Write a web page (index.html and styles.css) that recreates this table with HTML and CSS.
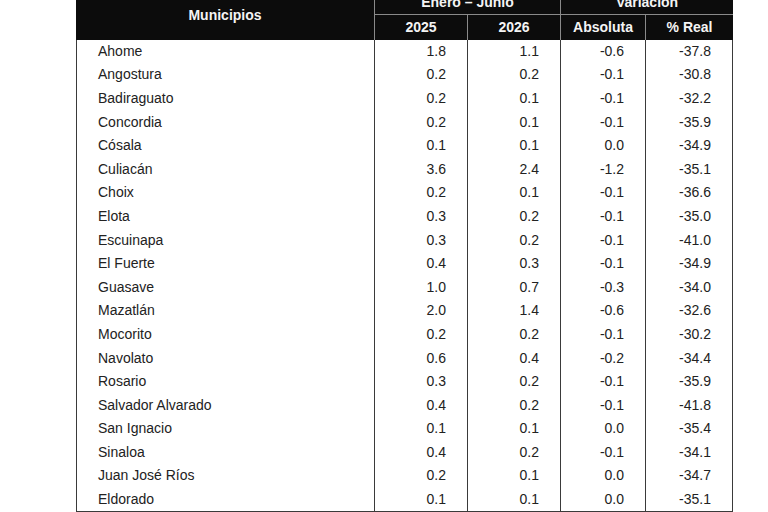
FILE: index.html
```html
<!DOCTYPE html>
<html lang="es">
<head>
<meta charset="utf-8">
<title>Municipios Enero – Junio</title>
<link rel="stylesheet" href="styles.css">
</head>
<body>
<div class="page">
<table class="data">
  <colgroup>
    <col class="c-mun">
    <col class="c-y1">
    <col class="c-y2">
    <col class="c-abs">
    <col class="c-real">
  </colgroup>
  <thead>
    <tr class="h1">
      <th rowspan="2" class="mun">Municipios</th>
      <th colspan="2" class="grp">Enero – Junio</th>
      <th colspan="2" class="grp last">Variación</th>
    </tr>
    <tr class="h2">
      <th>2025</th>
      <th>2026</th>
      <th>Absoluta</th>
      <th class="last">% Real</th>
    </tr>
  </thead>
  <tbody>
    <tr><td>Ahome</td><td>1.8</td><td>1.1</td><td>-0.6</td><td>-37.8</td></tr>
    <tr><td>Angostura</td><td>0.2</td><td>0.2</td><td>-0.1</td><td>-30.8</td></tr>
    <tr><td>Badiraguato</td><td>0.2</td><td>0.1</td><td>-0.1</td><td>-32.2</td></tr>
    <tr><td>Concordia</td><td>0.2</td><td>0.1</td><td>-0.1</td><td>-35.9</td></tr>
    <tr><td>Cósala</td><td>0.1</td><td>0.1</td><td>0.0</td><td>-34.9</td></tr>
    <tr><td>Culiacán</td><td>3.6</td><td>2.4</td><td>-1.2</td><td>-35.1</td></tr>
    <tr><td>Choix</td><td>0.2</td><td>0.1</td><td>-0.1</td><td>-36.6</td></tr>
    <tr><td>Elota</td><td>0.3</td><td>0.2</td><td>-0.1</td><td>-35.0</td></tr>
    <tr><td>Escuinapa</td><td>0.3</td><td>0.2</td><td>-0.1</td><td>-41.0</td></tr>
    <tr><td>El Fuerte</td><td>0.4</td><td>0.3</td><td>-0.1</td><td>-34.9</td></tr>
    <tr><td>Guasave</td><td>1.0</td><td>0.7</td><td>-0.3</td><td>-34.0</td></tr>
    <tr><td>Mazatlán</td><td>2.0</td><td>1.4</td><td>-0.6</td><td>-32.6</td></tr>
    <tr><td>Mocorito</td><td>0.2</td><td>0.2</td><td>-0.1</td><td>-30.2</td></tr>
    <tr><td>Navolato</td><td>0.6</td><td>0.4</td><td>-0.2</td><td>-34.4</td></tr>
    <tr><td>Rosario</td><td>0.3</td><td>0.2</td><td>-0.1</td><td>-35.9</td></tr>
    <tr><td>Salvador Alvarado</td><td>0.4</td><td>0.2</td><td>-0.1</td><td>-41.8</td></tr>
    <tr><td>San Ignacio</td><td>0.1</td><td>0.1</td><td>0.0</td><td>-35.4</td></tr>
    <tr><td>Sinaloa</td><td>0.4</td><td>0.2</td><td>-0.1</td><td>-34.1</td></tr>
    <tr><td>Juan José Ríos</td><td>0.2</td><td>0.1</td><td>0.0</td><td>-34.7</td></tr>
    <tr><td>Eldorado</td><td>0.1</td><td>0.1</td><td>0.0</td><td>-35.1</td></tr>
  </tbody>
</table>
</div>
</body>
</html>
```
FILE: styles.css
```css
html, body {
  margin: 0;
  padding: 0;
  background: #ffffff;
}
body {
  width: 768px;
  height: 512px;
  overflow: hidden;
  font-family: "Liberation Sans", Arial, sans-serif;
}
.page {
  padding-left: 76px;
}
.data {
  margin-top: -11px;
  table-layout: fixed;
  width: 657px;
  border-collapse: separate;
  border-spacing: 0;
  font-size: 14px;
  color: #222222;
}
.c-mun { width: 299px; }
.c-y1 { width: 93px; }
.c-y2 { width: 93px; }
.c-abs { width: 85px; }
.c-real { width: 87px; }

.data th {
  background: #0c0c0c;
  color: #f4f4f4;
  font-weight: bold;
  text-align: center;
  padding: 0;
  line-height: 16px;
  border-right: 1px solid #8a8a8a;
}
.data th.last {
  border-right: none;
}
.data .h1 th {
  height: 25px;
}
.data .h1 th.grp {
  border-bottom: 1px solid #8a8a8a;
}
.data .h2 th {
  height: 24px;
  padding-bottom: 1px;
}

.data tbody tr {
  height: 23.6px;
}
.data td {
  padding: 0 21px 2px 21px;
  line-height: 16px;
  text-align: right;
  border-right: 1px solid #3a3a3a;
  white-space: nowrap;
}
.data td:first-child {
  text-align: left;
  border-left: 1px solid #3a3a3a;
}
.data tbody tr:last-child td {
  border-bottom: 1px solid #3a3a3a;
}
```
